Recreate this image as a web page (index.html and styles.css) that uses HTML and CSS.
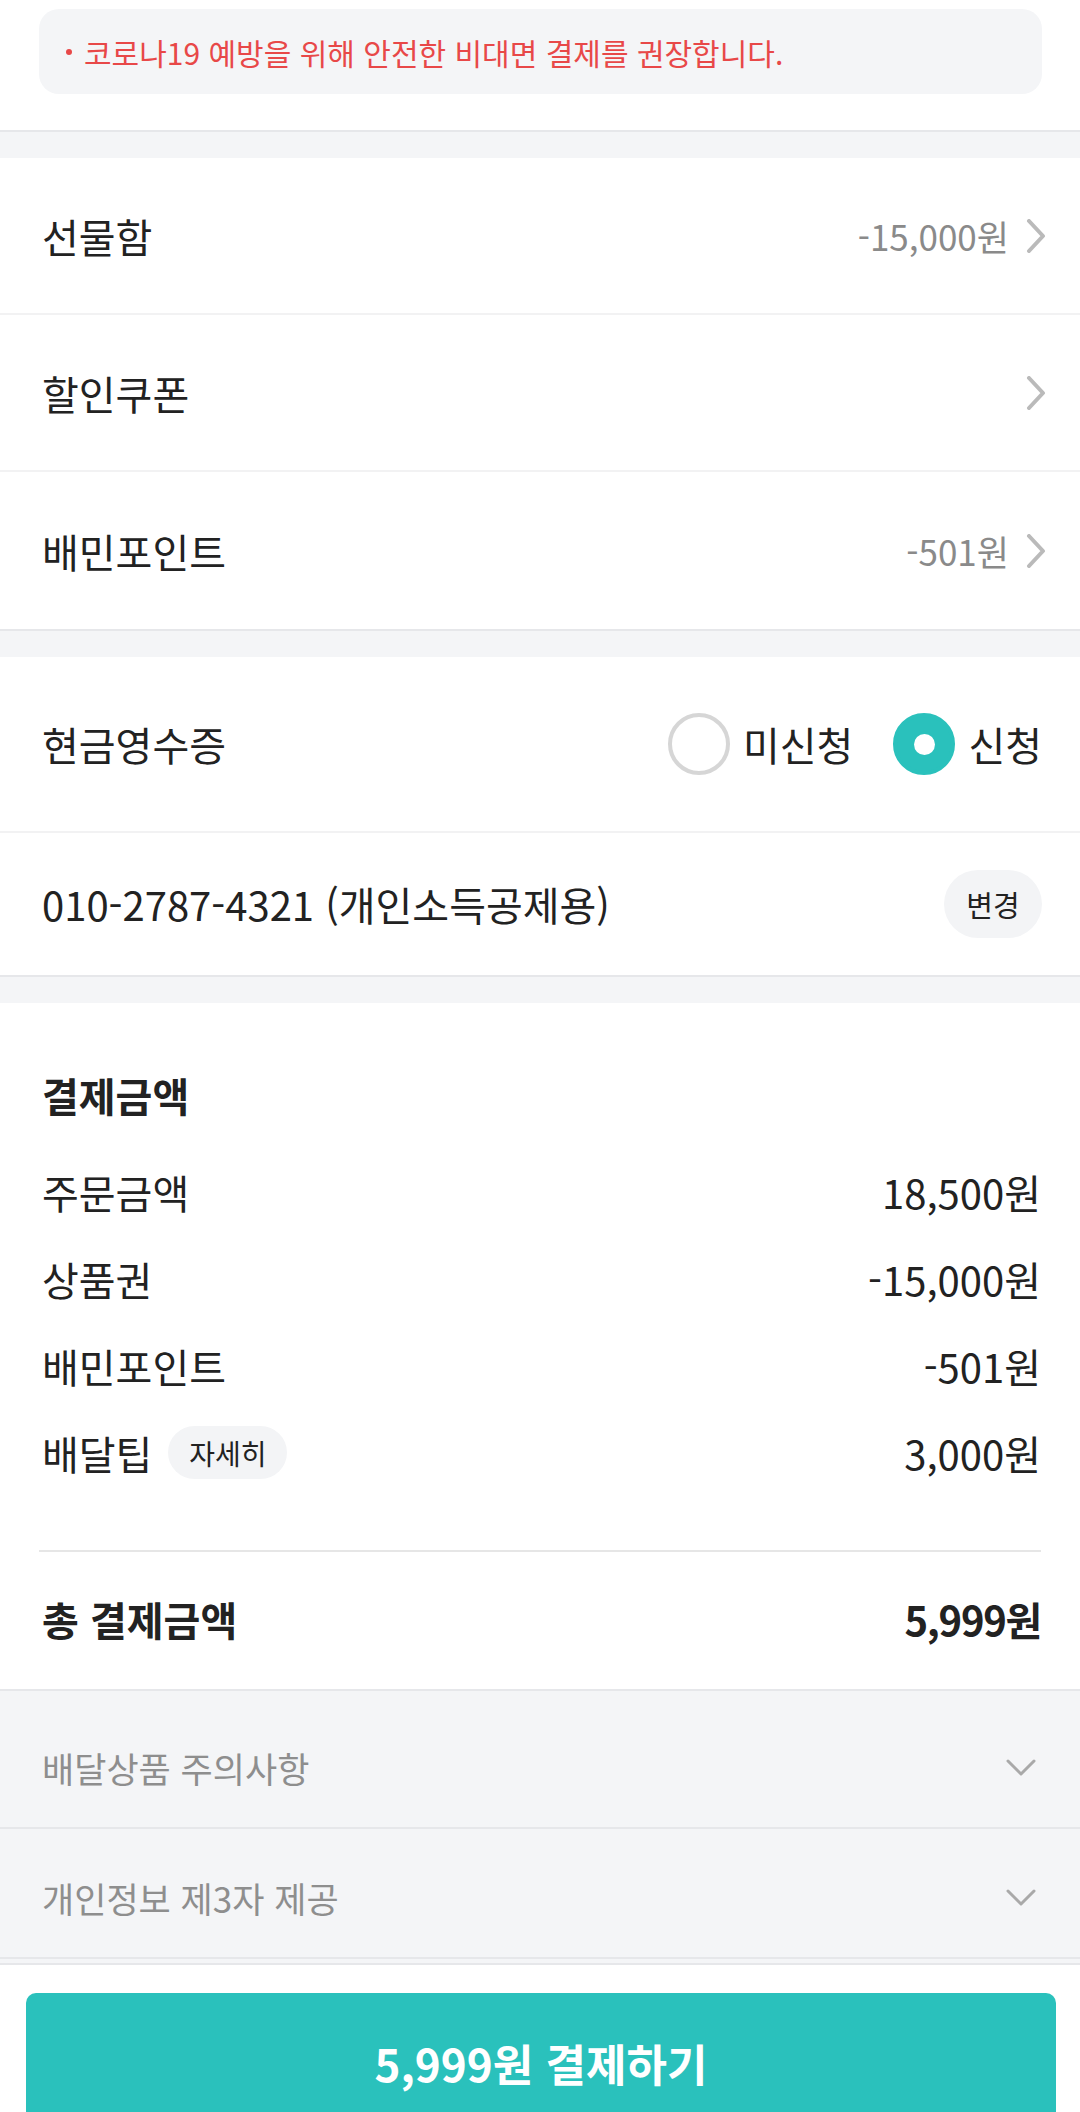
FILE: index.html
```html
<!DOCTYPE html>
<html lang="ko">
<head>
  <meta charset="UTF-8" />
  <title>결제하기</title>
  <link rel="stylesheet" href="styles.css">
</head>
<body>
  <div class="screen">
    <section class="block notice-wrap">
      <div class="notice">
        <span class="notice-dot"></span>
        코로나19 예방을 위해 안전한 비대면 결제를 권장합니다.
      </div>
    </section>

    <section class="block">
      <a class="row link-row" href="#">
        <span class="label">선물함</span>
        <span class="value">-15,000원</span>
        <svg class="chev-right" width="20" height="34" viewBox="0 0 20 34"><polyline points="3,2 17,17 3,32" /></svg>
      </a>
      <a class="row link-row" href="#">
        <span class="label">할인쿠폰</span>
        <span class="value"></span>
        <svg class="chev-right" width="20" height="34" viewBox="0 0 20 34"><polyline points="3,2 17,17 3,32" /></svg>
      </a>
      <a class="row link-row" href="#">
        <span class="label">배민포인트</span>
        <span class="value">-501원</span>
        <svg class="chev-right" width="20" height="34" viewBox="0 0 20 34"><polyline points="3,2 17,17 3,32" /></svg>
      </a>
    </section>

    <section class="block">
      <div class="row receipt-row">
        <span class="label">현금영수증</span>
        <div class="radios">
          <label class="radio">
            <span class="radio-mark"></span>
            미신청
          </label>
          <label class="radio checked">
            <span class="radio-mark"></span>
            신청
          </label>
        </div>
      </div>
      <div class="row phone-row">
        <span class="label">010-2787-4321 (개인소득공제용)</span>
        <button class="pill-btn">변경</button>
      </div>
    </section>

    <section class="block summary">
      <h2 class="sum-title">결제금액</h2>
      <div class="sum-row">
        <span>주문금액</span>
        <span>18,500원</span>
      </div>
      <div class="sum-row">
        <span>상품권</span>
        <span>-15,000원</span>
      </div>
      <div class="sum-row">
        <span>배민포인트</span>
        <span>-501원</span>
      </div>
      <div class="sum-row">
        <span class="tip">배달팁 <button class="chip">자세히</button></span>
        <span>3,000원</span>
      </div>
      <div class="sum-divider"></div>
      <div class="sum-row total">
        <span>총 결제금액</span>
        <span class="total-value">5,999원</span>
      </div>
    </section>

    <section class="accordion">
      <div class="acc-row">
        <span>배달상품 주의사항</span>
        <svg class="chev-down" width="30" height="17" viewBox="0 0 30 17"><polyline points="2,2 15,15 28,2" /></svg>
      </div>
      <div class="acc-row">
        <span>개인정보 제3자 제공</span>
        <svg class="chev-down" width="30" height="17" viewBox="0 0 30 17"><polyline points="2,2 15,15 28,2" /></svg>
      </div>
    </section>

    <div class="paybar">
      <button class="pay-btn">5,999원 결제하기</button>
    </div>
  </div>
</body>
</html>
```

FILE: styles.css
```css
html, body {
  margin: 0;
  background: #f4f5f7;
  overflow: hidden;
}
body {
  font-family: 'Noto Sans CJK KR', 'Noto Sans', sans-serif;
  color: #222;
}
.screen {
  width: 1080px;
  height: 2112px;
  overflow: hidden;
}
.block {
  background: #fff;
  border-bottom: 2px solid #e6e7ea;
  margin-bottom: 26px;
}
.notice-wrap {
  padding: 9px 38px 36px 39px;
}
.notice {
  display: flex;
  align-items: center;
  height: 85px;
  padding-left: 27px;
  background: #f4f5f7;
  border-radius: 20px;
  color: #e84848;
  font-size: 30px;
}
.notice-dot {
  width: 6px;
  height: 6px;
  border-radius: 50%;
  background: #e84848;
  margin-right: 12px;
}
.row {
  display: flex;
  align-items: center;
  padding: 0 38px 0 42px;
  border-bottom: 2px solid #f2f2f3;
  color: #222;
  text-decoration: none;
}
.row:last-child {
  border-bottom: none;
}
.label {
  font-size: 40px;
  line-height: 56px;
}
.link-row {
  height: 155px;
  padding-right: 34px;
}
.link-row:last-child {
  height: 157px;
}
.value {
  margin-left: auto;
  margin-right: 17px;
  font-size: 35px;
  color: #8a8a8a;
}
.chev-right polyline {
  fill: none;
  stroke: #bababa;
  stroke-width: 4;
  stroke-linecap: round;
  stroke-linejoin: round;
}
.receipt-row {
  height: 174px;
}
.radios {
  margin-left: auto;
  display: flex;
  align-items: center;
  gap: 40px;
}
.radio {
  display: flex;
  align-items: center;
  gap: 13px;
  font-size: 40px;
}
.radio-mark {
  box-sizing: border-box;
  width: 62px;
  height: 62px;
  border-radius: 50%;
  border: 4px solid #d6d6d6;
  display: flex;
  align-items: center;
  justify-content: center;
}
.radio.checked .radio-mark {
  border-color: #2ac1bc;
  background: #2ac1bc;
}
.radio.checked .radio-mark::after {
  content: '';
  width: 21px;
  height: 21px;
  border-radius: 50%;
  background: #fff;
}
.phone-row {
  height: 142px;
}
.pill-btn {
  margin-left: auto;
  width: 98px;
  height: 68px;
  border: none;
  border-radius: 34px;
  background: #f3f4f6;
  color: #222;
  font-family: inherit;
  font-size: 29px;
  padding: 0;
}
.summary {
  padding: 48px 39px 27px 42px;
  margin-bottom: 0;
}
.sum-title {
  margin: 0 0 10px;
  height: 87px;
  display: flex;
  align-items: center;
  font-size: 40px;
  font-weight: 700;
}
.sum-row {
  display: flex;
  align-items: center;
  justify-content: space-between;
  height: 87px;
  font-size: 40px;
}
.tip {
  display: flex;
  align-items: center;
  gap: 16px;
}
.chip {
  height: 53px;
  width: 119px;
  border: none;
  border-radius: 27px;
  background: #f3f4f6;
  color: #222;
  font-family: inherit;
  font-size: 28px;
  padding: 0;
}
.sum-divider {
  height: 2px;
  background: #e6e6e6;
  margin: 54px 0 0 -3px;
}
.total {
  margin-top: 23px;
  font-weight: 700;
}
.total-value {
  letter-spacing: -1.3px;
}
.accordion {
  padding: 8px 0 4px;
}
.acc-row {
  display: flex;
  align-items: center;
  justify-content: space-between;
  box-sizing: border-box;
  height: 130px;
  padding: 8px 44px 0 42px;
  border-bottom: 2px solid #e6e7ea;
  font-size: 35px;
  color: #8e8e8e;
}
.chev-down polyline {
  fill: none;
  stroke: #a9a9a9;
  stroke-width: 3;
  stroke-linecap: round;
  stroke-linejoin: round;
}
.paybar {
  background: #fff;
  border-top: 2px solid #e6e7ea;
  padding: 28px 24px 0 26px;
}
.pay-btn {
  display: block;
  width: 100%;
  height: 140px;
  border: none;
  border-radius: 10px;
  background: #2ac1bc;
  color: #fff;
  font-family: inherit;
  font-size: 44px;
  font-weight: 700;
}
```
